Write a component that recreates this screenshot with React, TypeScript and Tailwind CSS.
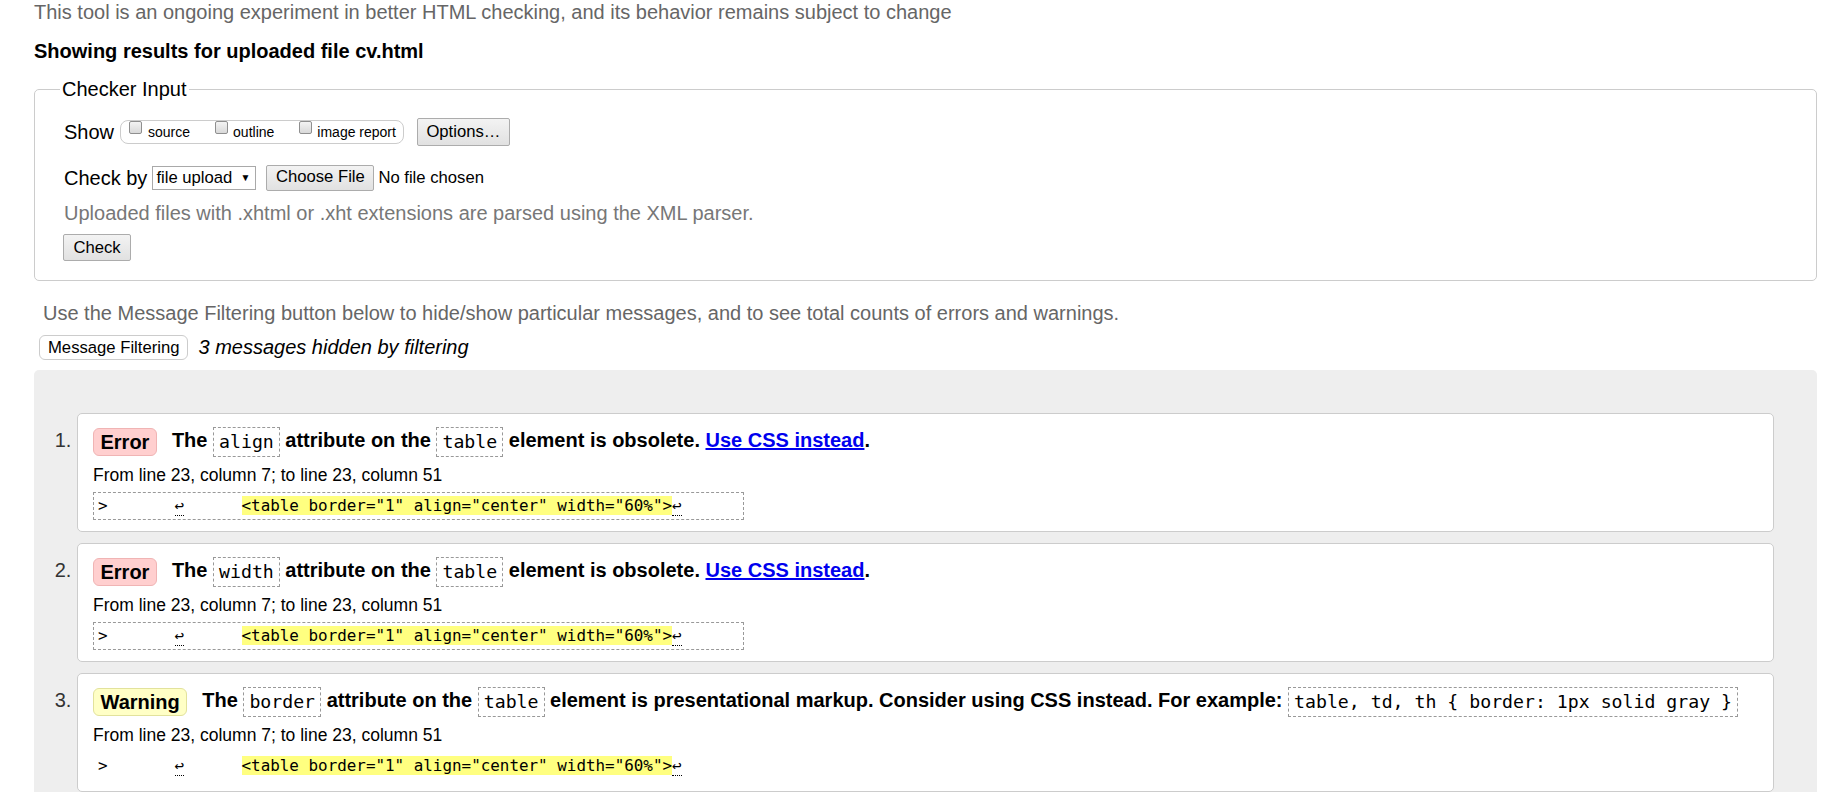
import React from 'react';

const messages = [
  { kind: 'Error', attr: 'align', bordered: true },
  { kind: 'Error', attr: 'width', bordered: true },
  { kind: 'Warning', attr: 'border', bordered: false },
];

function Code({ children }: { children: React.ReactNode }) {
  return (
    <code className="inline-block align-middle font-['DejaVu_Sans_Mono',monospace] font-normal text-[18.2px] leading-[28px] px-[5px] border border-dashed border-[#999]">
      {children}
    </code>
  );
}

function Badge({ kind }: { kind: string }) {
  const isError = kind === 'Error';
  return (
    <span
      className={`inline-block align-middle leading-[26px] px-[6.5px] rounded-[6px] border mr-[15px] ${
        isError ? 'bg-[#ffcfcf] border-[#f0b4b4]' : 'bg-[#ffffc6] border-[#e2e29c]'
      }`}
    >
      {kind}
    </span>
  );
}

function Btn({ children, className = '' }: { children: React.ReactNode; className?: string }) {
  return (
    <span
      className={`inline-flex items-center justify-center border border-[#acacac] bg-linear-to-b from-[#f3f3f3] to-[#e1e1e1] rounded-[2px] text-[16.67px] leading-none text-black ${className}`}
    >
      {children}
    </span>
  );
}

function Checkbox({ className = '' }: { className?: string }) {
  return (
    <span
      className={`block shrink-0 w-[13px] h-[13px] border border-[#8f8f8f] rounded-[2px] bg-linear-to-b from-[#f4f4f4] to-[#d9d9d9] ${className}`}
    />
  );
}

function Extract({ bordered }: { bordered: boolean }) {
  return (
    <div
      className={`w-[651px] font-['DejaVu_Sans_Mono',monospace] text-[15.9px] leading-[22px] py-[2px] pl-[4px] whitespace-pre border border-dashed ${
        bordered ? 'border-[#999]' : 'border-transparent'
      }`}
    >
      {'>       '}
      <span className="border-b border-dotted border-black">↩</span>
      {'      '}
      <span className="bg-[#ffff80]">{'<table border="1" align="center" width="60%">'}</span>
      <span className="border-b border-dotted border-black">↩</span>
    </div>
  );
}

export default function App() {
  return (
    <div className="min-h-screen bg-white text-black font-['Liberation_Sans',Arial,sans-serif] text-[20px]">
      <div className="pl-[34px] pr-[15px] pt-[1px]">
        <p className="text-[#666] leading-[23px]">
          This tool is an ongoing experiment in better HTML checking, and its behavior remains subject to change
        </p>
        <p className="font-bold leading-[23px] mt-[16px]">Showing results for uploaded file cv.html</p>

        <fieldset className="mt-[15px] border border-[#ccc] rounded-[5px] pl-[29px] pt-[17px] pb-[19px]">
          <legend className="-ml-[4px] px-[2px] leading-[23px]">Checker Input</legend>

          <div className="flex items-center h-[28px]">
            <span>Show</span>
            <span className="ml-[6px] flex items-start h-[24px] border border-[#ccc] rounded-[8px] pl-[8px] pr-[7px] text-[14px] leading-[16px]">
              <Checkbox />
              <span className="ml-[6px] mt-[3px]">source</span>
              <Checkbox className="ml-[25px]" />
              <span className="ml-[5px] mt-[3px]">outline</span>
              <Checkbox className="ml-[25px]" />
              <span className="ml-[5px] mt-[3px]">image report</span>
            </span>
            <Btn className="ml-[13px] w-[93px] h-[28px]">Options…</Btn>
          </div>

          <div className="flex items-center h-[26px] mt-[18.5px]">
            <span>Check by</span>
            <span className="ml-[5px] flex items-center justify-between w-[104px] h-[24px] border border-[#a9a9a9] bg-white pl-[3px] pr-[5px] text-[16.67px]">
              <span>file upload</span>
              <span className="text-[10px]">▼</span>
            </span>
            <Btn className="ml-[10px] w-[108px] h-[26px]">Choose File</Btn>
            <span className="ml-[4px] text-[16.67px]">No file chosen</span>
          </div>

          <p className="text-[#777] leading-[23px] mt-[11px]">
            Uploaded files with .xhtml or .xht extensions are parsed using the XML parser.
          </p>

          <div className="mt-[6px] -ml-[1px]">
            <Btn className="w-[68px] h-[27px]">Check</Btn>
          </div>
        </fieldset>

        <p className="text-[#666] leading-[23px] mt-[21px] ml-[9px]">
          Use the Message Filtering button below to hide/show particular messages, and to see total counts of errors and warnings.
        </p>

        <div className="flex items-center mt-[10px] ml-[5px]">
          <span className="inline-flex items-center justify-center h-[25px] px-[8px] border border-[#ccc] rounded-[6px] bg-white text-[16.67px]">
            Message Filtering
          </span>
          <span className="ml-[10px] italic leading-[23px]">3 messages hidden by filtering</span>
        </div>

        <div className="mt-[10px] bg-[#eee] rounded-t-[5px] pt-[43px] px-[43px] pb-[2px]">
          <ol className="list-decimal">
            {messages.map((m, i) => (
              <li
                key={i}
                className="bg-white border border-[#ccc] rounded-[5px] pt-[11px] pb-[11px] px-[15px] mb-[11px] marker:text-[#333]"
              >
                <div className="font-bold leading-[30px]">
                  <Badge kind={m.kind} />
                  The <Code>{m.attr}</Code> attribute on the <Code>table</Code>{' '}
                  {m.kind === 'Error' ? (
                    <>
                      element is obsolete.{' '}
                      <a href="#" className="text-[#00e] underline">
                        Use CSS instead
                      </a>
                      .
                    </>
                  ) : (
                    <>
                      element is presentational markup. Consider using CSS instead. For example:{' '}
                      <Code>{'table, td, th { border: 1px solid gray }'}</Code>
                    </>
                  )}
                </div>
                <p className="text-[17.5px] leading-[20px] mt-[8px]">From line 23, column 7; to line 23, column 51</p>
                <div className="mt-[7px]">
                  <Extract bordered={m.bordered} />
                </div>
              </li>
            ))}
          </ol>
        </div>
      </div>
    </div>
  );
}
